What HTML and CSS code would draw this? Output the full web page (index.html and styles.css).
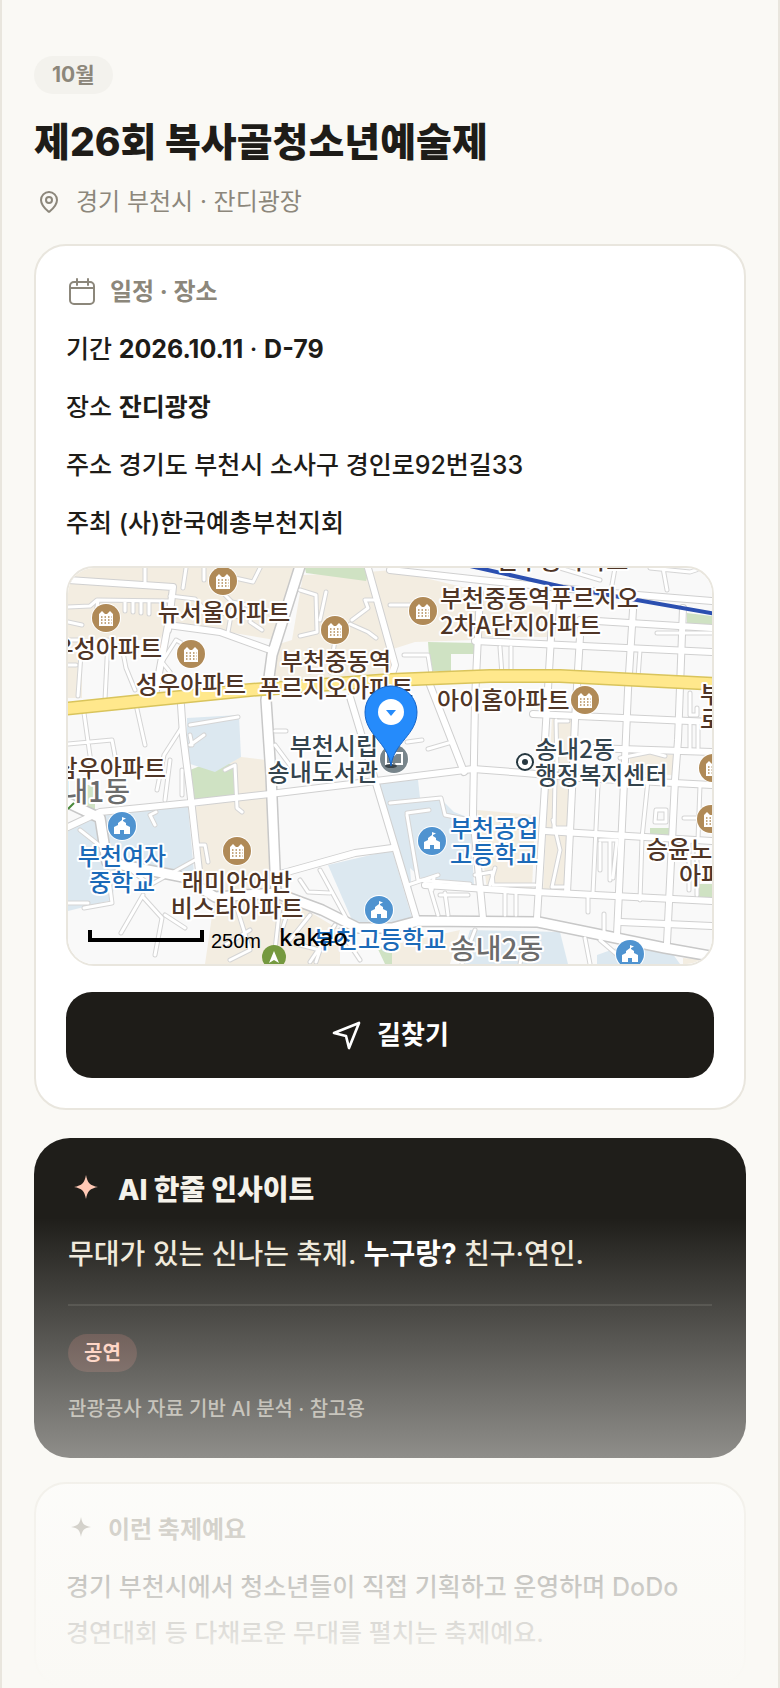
FILE: index.html
```
<!DOCTYPE html>
<html lang="ko">
<head>
	<meta charset="utf-8">
	<meta name="viewport" content="width=device-width, initial-scale=1">
	<title>제26회 복사골청소년예술제</title>
	<link rel="stylesheet" href="styles.css">
</head>
<body>
<main class="page">
	<header class="hero">
		<span class="month">10월</span>
		<h1 class="title">제26회 복사골청소년예술제</h1>
		<p class="place">
			<svg class="place-icon" viewBox="0 0 24 24"><path d="M20 10c0 4.800-5.400 9.900-7.400 11.600a1 1 0 0 1-1.200 0C9.400 19.900 4 14.800 4 10a8 8 0 0 1 16 0z"/><circle cx="12" cy="10" r="3"/></svg>
			경기 부천시 · 잔디광장
		</p>
	</header>

	<section class="card">
		<h2 class="card-title">
			<svg class="line-icon" viewBox="0 0 32 32"><rect x="4" y="6" width="24" height="22" rx="4"/><path d="M4 12h24M11 3v6M22 3v6"/></svg>
			일정 · 장소
		</h2>
		<ul class="info">
			<li>기간 <b>2026.10.11</b> · <b>D-79</b></li>
			<li>장소 <b>잔디광장</b></li>
			<li>주소 경기도 부천시 소사구 경인로92번길33</li>
			<li>주최 (사)한국예총부천지회</li>
		</ul>

		<div class="map">
			<svg viewBox="68 568 644 396" preserveAspectRatio="xMidYMid slice" role="img" aria-label="잔디광장 지도">
				<defs>
					<g id="apt">
						<circle r="15" fill="#fff"/><circle r="14" fill="#b08a57"/>
						<path fill="#fff" d="M-7 8V-4L-4-7-1-4H1L4-7 7-4V8z"/>
						<path stroke="#b08a57" stroke-width="1.500" stroke-dasharray="1.500 2" d="M-5-1H6M-5 2H6M-5 5H6"/>
					</g>
					<g id="school">
						<circle r="15" fill="#fff"/><circle r="14" fill="#4f93d0"/>
						<path fill="#fff" d="M-8 8V1L-4-1V-3L0-6V-9L4-7.500 1-6V-5L4-3V-1L8 1V8H2V4H-2V8z"/>
					</g>
					<!-- streets are drawn twice, grey edge first and then white fill -->
					<g id="lanes">
						<path d="M68 607 90 606 97 600 169 601M98 601 96 613M125 602V611M133 602V612M141 602V613M149 602V614M68 622 82 625M108 640 105 700M121 642 126 668 135 690M82 640 78 696M68 665H76"/>
						<path d="M145 568V584M170 596 195 599 204 609 240 617M186 568 183 588M204 568V580M225 595 232 602 252 606 250 622 262 630M235 578 253 582 260 568M232 610 228 632M194 650 176 640 162 662 170 672"/>
						<path d="M84 713 92 770M68 744 112 740 115 756M135 700 145 745M182 727 164 755 157 790M190 725 238 717M190 735 192 745M190 745 204 735M170 760 165 800M182 770V795"/>
						<path d="M300 590 316 595 317 632 300 636M326 592 320 620M352 620 368 608 365 600 378 600M350 624 368 632 376 638M335 640 330 672M310 650V672M275 731H286M275 745 292 768"/>
						<path d="M225 770 235 765 237 808 242 812M197 845H205L208 862M155 825 150 815 156 812M80 830 150 885 195 860M68 903H88M84 908 112 903 108 872M143 895 121 933M143 897 162 918 155 955M165 915 185 928"/>
						<path d="M300 880 308 892 330 893M320 870 350 925M236 905 250 950 230 960M225 945 250 930M280 905 275 950M290 905 282 930M310 915 290 940M335 925 310 962M300 945 320 950 316 962M340 930 360 960"/>
						<path d="M390 803 441 798 445 815 470 820M407 813 429 810M407 815 418 880 470 884M434 878 432 890M475 875 492 872 493 885H535M490 885 495 868M500 820H530M533 825 500 830M408 885 438 875M430 888 438 915M440 895H468M445 893 448 915M505 893V915M516 893V915"/>
						<path d="M410 605H390M432 612 412 608M404 655H428L432 680M500 647 502 675M511 647V676M560 568 600 580M663 568 667 590M615 568 612 585M650 568 690 572 702 568M657 633H712M534 714 548 714M556 720 557 770M556 721H568M553 820 560 850 552 887H567M555 780 554 828 570 828"/>
						<path d="M600 843V870M600 840H617L613 878M610 842V880M588 895V912M604 914V935M655 822 656 810H666V822zM684 818H696M689 840V890M697 850V895M690 720V750M698 722V748M620 758 650 752 665 756M407 742 422 740M428 749 452 742M585 938 590 964M628 964 600 940"/>
						<path d="M68 640H82M598 785 593 893M648 780 642 838 640 900M700 785 698 840M640 650 638 678M690 693V715H697V708M525 940 520 964M475 930 462 964"/>
					</g>
					<g id="streets">
						<path d="M168 625 220 632 270 650M168 625 155 695M181 705 183 735 190 790 200 880M68 827 100 812 190 803 270 794 392 779 473 769 525 773 580 778 712 785M280 874 355 853 392 848"/>
						<path d="M68 580 173 587 168 630M390 570 480 580 600 592 712 601M475 641 712 652M580 620 712 628M533 714 712 722M590 748 712 752M545 831 712 841M425 885 517 891 712 901M620 922 712 926"/>
						<path d="M581 620 575 720 572 790 567 893M633 610 628 690 625 760 617 935M480 593 475 700 473 815 483 918M553 603 545 740 545 785 537 918M683 608 678 740 675 780 667 943M430 685 464 772M368 568 395 665 390 680M350 697 375 780 417 920"/>
					</g>
					<g id="roads">
						<path d="M300 566 272 655 266 700 271 775 276 893M64 801 100 818 107 862 183 877 215 897 276 893 322 910 358 928 392 928 418 921 538 922 665 948 716 957"/>
					</g>
				</defs>

				<rect x="68" y="568" width="644" height="396" fill="#f9f9f9"/>
				<g fill="#f3ede1">
					<path d="M68 568H297L275 640 168 622 160 640H68zM68 640H82V698H68z"/>
					<path d="M303 575 368 572 392 570 475 590V640L415 642 390 650 392 678 272 682 276 645 292 640zM476 600 552 608 550 637H476z"/>
					<path d="M225 755 266 760 270 890 215 893 200 870 195 807 235 797z"/>
					<path d="M215 895 290 900 340 930V964H205zM477 810 535 815 532 890 487 890zM552 717H574L566 890H543z"/>
					<path d="M630 752 674 755 672 775H630zM683 958 712 960V964H683zM392 945 460 930 450 964H392z"/>
				</g>
				<g fill="#cfe2c3">
					<path d="M305 568H370L366 581 306 573zM428 642 476 643V654H451V671H430zM687 613 712 616V625L687 623z"/>
					<path d="M190 770 215 760 234 765V797L192 800zM80 785H95V810L80 802zM650 828H670V836H650zM698 884H712V898H698zM376 945 392 950V964H385z"/>
				</g>
				<g fill="#dce8f0">
					<path d="M187 718 239 715 241 757 215 772 187 763zM68 825 107 812 188 806 194 872 118 862 112 900 68 911zM328 865 392 850 412 918 385 928 352 920z"/>
					<path d="M390 781 418 780 420 798H440L454 812 470 818 474 885 432 888 410 868zM376 785 390 781 410 868 414 918 392 850zM470 930 560 932 568 964H460zM597 955 625 945 670 950 680 964H597z"/>
				</g>

				<use href="#lanes" class="lane-edge"/>
				<use href="#streets" class="street-edge"/>
				<use href="#roads" class="road-edge"/>
				<use href="#lanes" class="lane-fill"/>
				<use href="#streets" class="street-fill"/>
				<use href="#roads" class="road-fill"/>
				<path class="highway-edge" d="M64 709 150 700 250 690 390 680 490 676 560 676 716 684"/>
				<path class="highway-fill" d="M64 709 150 700 250 690 390 680 490 676 560 676 716 684"/>
				<path class="rail" d="M470 566 563 587 716 614"/>

				<g class="map-label apt-label">
					<text x="562" y="569" text-anchor="middle">신주공아파트</text>
					<text x="224" y="621" text-anchor="middle">뉴서울아파트</text>
					<text x="162" y="657" text-anchor="end">우성아파트</text>
					<text x="191" y="693" text-anchor="middle">성우아파트</text>
					<text x="336" y="670" text-anchor="middle">부천중동역</text>
					<text x="336" y="697" text-anchor="middle">푸르지오아파트</text>
					<text x="440" y="607">부천중동역푸르지오</text>
					<text x="440" y="634">2차A단지아파트</text>
					<text x="437" y="709">아이홈아파트</text>
					<text x="166" y="777" text-anchor="end">삼우아파트</text>
					<text x="237" y="891" text-anchor="middle">래미안어반</text>
					<text x="237" y="917" text-anchor="middle">비스타아파트</text>
					<text x="700" y="703">부</text>
					<text x="700" y="728">로</text>
					<text x="646" y="858">승윤노블</text>
					<text x="679" y="884">아파트</text>
				</g>
				<g class="map-label school-label">
					<text x="122" y="865" text-anchor="middle">부천여자</text>
					<text x="122" y="891" text-anchor="middle">중학교</text>
					<text x="450" y="837">부천공업</text>
					<text x="450" y="863">고등학교</text>
					<text x="380" y="948" text-anchor="middle">부천고등학교</text>
				</g>
				<g class="map-label office-label">
					<text x="378" y="755" text-anchor="end">부천시립</text>
					<text x="378" y="781" text-anchor="end">송내도서관</text>
					<text x="535" y="758">송내2동</text>
					<text x="535" y="784">행정복지센터</text>
				</g>
				<g class="map-label dong-label">
					<text x="130" y="802" text-anchor="end">송내1동</text>
					<text x="450" y="959">송내2동</text>
				</g>

				<use href="#apt" x="223" y="581"/>
				<use href="#apt" x="106" y="618"/>
				<use href="#apt" x="191" y="654"/>
				<use href="#apt" x="335" y="630"/>
				<use href="#apt" x="423" y="611"/>
				<use href="#apt" x="585" y="700"/>
				<use href="#apt" x="237" y="851"/>
				<use href="#apt" x="713" y="768"/>
				<use href="#apt" x="711" y="819"/>
				<use href="#school" x="122" y="826"/>
				<use href="#school" x="432" y="841"/>
				<use href="#school" x="379" y="910"/>
				<use href="#school" x="630" y="954"/>
				<circle cx="525" cy="762" r="8" fill="#fff" stroke="#263840" stroke-width="2"/>
				<circle cx="525" cy="762" r="3" fill="#263840"/>
				<circle cx="274" cy="957" r="12" fill="#75993f"/>
				<path fill="#fff" d="M274 951 279 963 274 960 269 963z"/>
				<path stroke="#4b8a3c" stroke-width="2" d="M68 809 74 803"/>

				<circle cx="394" cy="759" r="15" fill="#fff"/>
				<circle cx="394" cy="759" r="14" fill="#78858b"/>
				<path fill="none" stroke="#fff" stroke-width="2" d="M386 753H392L394 755 396 753H402V764H396L394 766 392 764H386z"/>
				<ellipse cx="391" cy="766" rx="6" ry="2" fill="#3a444a"/>
				<path fill="#258bfb" stroke="#1565c9" d="M391 766C388 742 365 735 365 712A26 26 0 0 1 417 712C417 735 394 742 391 766z"/>
				<circle cx="391" cy="712" r="13" fill="#fff"/>
				<path fill="#258bfb" d="M386 710H396L391 716z"/>

				<path class="scale-bar" d="M90 930V940H202V930"/>
				<text class="scale-text" x="211" y="948">250m</text>
				<text class="brand-text" x="279" y="946">kakao</text>
			</svg>
		</div>

		<button class="route" type="button">
			<svg class="line-icon" viewBox="0 0 24 24"><path d="M21 3 13.500 21.750 11.250 12.750 2.250 10.500z"/></svg>
			길찾기
		</button>
	</section>

	<section class="insight">
		<h2 class="insight-title">
			<svg class="insight-star" viewBox="0 0 36 36"><path d="M18 3C19.500 11 22 13.500 30 15 22 16.500 19.500 19 18 27 16.500 19 14 16.500 6 15 14 13.500 16.500 11 18 3z"/></svg>
			AI 한줄 인사이트
		</h2>
		<p class="insight-text">무대가 있는 신나는 축제. <b>누구랑?</b> 친구·연인.</p>
		<div class="insight-more">
			<span class="tag">공연</span>
			<p class="note">관광공사 자료 기반 AI 분석 · 참고용</p>
		</div>
	</section>

	<section class="card about">
		<h2 class="card-title">
			<svg class="about-star" viewBox="0 0 30 32"><path d="M15 3C16.200 10 18 11.800 25 13 18 14.200 16.200 16 15 23 13.800 16 12 14.200 5 13 12 11.800 13.800 10 15 3z"/></svg>
			이런 축제예요
		</h2>
		<p class="about-text">경기 부천시에서 청소년들이 직접 기획하고 운영하며 DoDo 경연대회 등 다채로운 무대를 펼치는 축제예요.</p>
	</section>

	<div class="fade"></div>
</main>
</body>
</html>
```
FILE: styles.css
```
* {
	box-sizing: border-box;
}

body {
	margin: 0;
	background: #faf9f5;
	color: #1e1c18;
	font-family: Inter, "Noto Sans CJK KR", sans-serif;
	font-size: 25px;
	font-weight: 500;
	word-break: keep-all;
}

h1, h2, p, ul {
	margin: 0;
	padding: 0;
}

b {
	font-weight: 700;
}

.page {
	position: relative;
	min-height: 100vh;
	padding: 56px 32px 0;
	border-left: 2px solid #e9e6de;
	border-right: 2px solid #e9e6de;
	overflow: hidden;
}

/* header */
.month {
	display: inline-block;
	padding: 0 18px;
	border-radius: 19px;
	background: #f3f2ed;
	color: #8c877b;
	font-size: 21px;
	font-weight: 700;
	line-height: 38px;
	vertical-align: top;
}

.title {
	margin-top: 22px;
	font-size: 39px;
	font-weight: 800;
	line-height: 52px;
}

.place {
	display: flex;
	align-items: center;
	gap: 12px;
	margin-top: 16px;
	color: #8c877b;
	font-size: 24px;
	font-weight: 400;
	line-height: 36px;
}

.place-icon {
	width: 30px;
	height: 24px;
	fill: none;
	stroke: #8c877b;
	stroke-width: 2;
}

/* cards */
.card {
	margin-top: 24px;
	padding: 30px;
	border: 2px solid #e9e6de;
	border-radius: 32px;
	background: #fff;
}

.card-title {
	display: flex;
	align-items: center;
	gap: 12px;
	color: #8c877b;
	font-size: 24px;
	font-weight: 700;
	line-height: 32px;
}

.line-icon {
	width: 32px;
	height: 32px;
	fill: none;
	stroke: currentColor;
	stroke-width: 2;
	stroke-linecap: round;
	stroke-linejoin: round;
}

.info {
	display: grid;
	gap: 16px;
	margin-top: 20px;
	list-style: none;
	line-height: 42px;
}

.route {
	display: flex;
	align-items: center;
	justify-content: center;
	gap: 14px;
	width: 100%;
	height: 86px;
	margin-top: 26px;
	padding: 0;
	border: 0;
	border-radius: 26px;
	background: #1e1c18;
	color: #fff;
	font-family: inherit;
	font-size: 26px;
	font-weight: 700;
	line-height: 36px;
}

/* map */
.map {
	height: 400px;
	margin-top: 22px;
	border: 2px solid #e9e6de;
	border-radius: 28px;
	overflow: hidden;
}

.map svg {
	display: block;
	width: 100%;
	height: 100%;
}

.lane-edge, .lane-fill, .street-edge, .street-fill, .road-edge, .road-fill,
.highway-edge, .highway-fill, .rail, .scale-bar {
	fill: none;
	stroke-linecap: round;
	stroke-linejoin: round;
}

.lane-edge {
	stroke: #d5d5d5;
	stroke-width: 5px;
}

.lane-fill {
	stroke: #fff;
	stroke-width: 3px;
}

.street-edge {
	stroke: #d0d0d0;
	stroke-width: 8px;
}

.street-fill {
	stroke: #fff;
	stroke-width: 6px;
}

.road-edge {
	stroke: #c8c8c8;
	stroke-width: 12px;
}

.road-fill {
	stroke: #fff;
	stroke-width: 9px;
}

.highway-edge {
	stroke: #d9c45c;
	stroke-width: 14px;
}

.highway-fill {
	stroke: #ffe88c;
	stroke-width: 11px;
}

.rail {
	stroke: #2b4fb0;
	stroke-width: 4px;
}

.map-label {
	font-family: "Noto Sans CJK KR", sans-serif;
	font-size: 24px;
	font-weight: 500;
	stroke: #fff;
	stroke-width: 4px;
	stroke-linejoin: round;
	paint-order: stroke;
}

.apt-label {
	fill: #4f3526;
}

.school-label {
	fill: #1b6ab8;
}

.office-label {
	fill: #34444d;
}

.dong-label {
	fill: #6c6c6c;
	font-size: 28px;
}

.scale-bar {
	stroke: #000;
	stroke-width: 4px;
	stroke-linecap: butt;
	stroke-linejoin: miter;
}

.scale-text {
	font-family: "Liberation Sans", sans-serif;
	font-size: 20px;
	font-weight: 400;
}

.brand-text {
	font-family: "Noto Sans", sans-serif;
	font-size: 24px;
}

/* insight */
.insight {
	margin-top: 28px;
	padding: 34px;
	border-radius: 36px;
	background: #1f1e1a;
	color: #f5f2ea;
}

.insight-title {
	display: flex;
	align-items: center;
	gap: 14px;
	font-size: 28px;
	font-weight: 800;
	line-height: 36px;
}

.insight-star {
	width: 36px;
	height: 36px;
	fill: #ffc9b5;
}

.insight-text {
	margin-top: 22px;
	color: #efe9da;
	font-size: 28px;
	line-height: 48px;
}

.insight-text b {
	color: #fff;
}

.insight-more {
	margin-top: 26px;
	padding-top: 28px;
	border-top: 2px solid #35342f;
}

.tag {
	display: inline-block;
	padding: 0 16px;
	border-radius: 19px;
	background: #46302a;
	color: #ffc9b5;
	font-size: 20px;
	font-weight: 700;
	line-height: 38px;
	vertical-align: top;
}

.note {
	margin-top: 22px;
	color: #a5a196;
	font-size: 20px;
	line-height: 30px;
}

/* about */
.about-star {
	width: 30px;
	height: 32px;
	fill: #8c877b;
}

.about-text {
	margin-top: 18px;
	line-height: 46px;
}

.fade {
	position: absolute;
	right: 0;
	bottom: 0;
	left: 0;
	height: 470px;
	background: linear-gradient(rgba(250, 249, 245, 0), #faf9f5);
	pointer-events: none;
}
```
